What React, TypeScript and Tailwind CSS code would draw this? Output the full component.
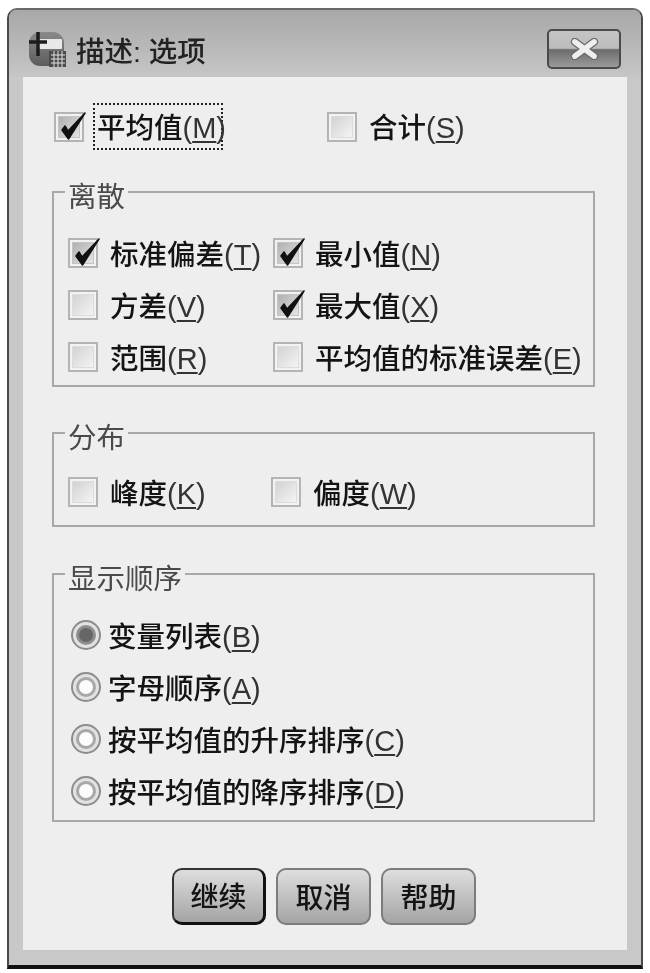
import React from "react";

const Check = ({ checked = false }: { checked?: boolean }) => (
  <span className="relative flex h-[30px] w-[30px] shrink-0 items-center justify-center border-2 border-[#b4b4b4] bg-[#f2f2f2]">
    <span
      className={
        checked
          ? "h-[22px] w-[22px] border border-[#c4c4c4] bg-gradient-to-br from-[#b0b0b0] to-[#e4e4e4]"
          : "h-[22px] w-[22px] border border-[#dcdcdc] bg-gradient-to-br from-[#d2d2d2] to-[#f4f4f4]"
      }
    />
    {checked && (
      <svg viewBox="0 0 30 30" className="absolute -left-[2px] -top-[2px] h-[30px] w-[30px] overflow-visible">
        <path d="M8 18 L14.5 27 L31 1 L14 19 L11 14 Z" fill="#111" stroke="#111" strokeWidth="1.5" strokeLinejoin="round" />
      </svg>
    )}
  </span>
);

const Radio = ({ checked = false }: { checked?: boolean }) => (
  <span className="flex h-[30px] w-[30px] shrink-0 items-center justify-center rounded-full border-2 border-[#8c8c8c] bg-[#e2e2e2]">
    <span
      className={
        checked
          ? "h-[20px] w-[20px] rounded-full border-[3px] border-[#8e8e8e] bg-[#666666]"
          : "h-[20px] w-[20px] rounded-full border-[3px] border-[#a8a8a8] bg-[#fcfcfc]"
      }
    />
  </span>
);

// label text + underlined mnemonic, e.g. 方差(V)
const Label = ({ text, mn }: { text: string; mn: string }) => (
  <span className="whitespace-nowrap pt-[3px] text-[28.5px] font-medium leading-[36px] text-[#141414]">
    {text}
    <span className="text-[29px] font-normal text-[#333]">
      (<span className="underline underline-offset-[3px]">{mn}</span>)
    </span>
  </span>
);

const CheckRow = ({ text, mn, checked }: { text: string; mn: string; checked?: boolean }) => (
  <div className="flex h-[52px] items-center gap-[12px]">
    <Check checked={checked} />
    <Label text={text} mn={mn} />
  </div>
);

const RadioRow = ({ text, mn, checked }: { text: string; mn: string; checked?: boolean }) => (
  <div className="flex h-[52px] items-center gap-[7px] pl-[3px]">
    <Radio checked={checked} />
    <Label text={text} mn={mn} />
  </div>
);

const Group = ({ title, className, children }: { title: string; className: string; children: React.ReactNode }) => (
  <fieldset className={`ml-[29px] w-[543px] border-2 border-[#a8a8a8] pl-[14px] ${className}`}>
    <legend className="-ml-[3px] px-[3px] text-[28.5px] leading-[28px] text-[#4a4a4a]">
      <span className="inline-block translate-y-[5px]">{title}</span>
    </legend>
    {children}
  </fieldset>
);

const Btn = ({ label, primary, className }: { label: string; primary?: boolean; className: string }) => (
  <button
    className={`flex h-[57px] items-center justify-center rounded-[10px] border-2 bg-gradient-to-b from-[#dedede] to-[#a4a4a4] pt-[4px] text-[28px] font-medium text-[#141414] ${
      primary ? "border-[#333] border-r-[3px] border-b-[3px] border-r-[#111] border-b-[#111]" : "border-[#7c7c7c]"
    } ${className}`}
  >
    {label}
  </button>
);

export default function App() {
  return (
    <div className="h-[973px] w-[650px] bg-white px-[7px] pt-[8px] font-['Liberation_Sans','Noto_Sans_CJK_SC',sans-serif] blur-[0.6px]">
      <div className="flex h-[961px] w-[636px] flex-col rounded-t-[10px] border-x-2 border-t-2 border-b-4 border-x-[#4a4a4a] border-t-[#6a6a6a] border-b-[#111] bg-[#c8c8c8]">
        {/* title bar */}
        <div className="flex h-[67px] shrink-0 items-center rounded-t-[8px] bg-gradient-to-b from-[#a8a8a8] to-[#c6c6c6] pl-[19px] pr-[20px] pt-[11px]">
          <svg viewBox="0 0 38 38" className="h-[38px] w-[38px] shrink-0">
            <defs>
              <linearGradient id="ic" x1="0" y1="0" x2="0" y2="1">
                <stop offset="0" stopColor="#8a8a8a" />
                <stop offset="1" stopColor="#5c5c5c" />
              </linearGradient>
            </defs>
            <rect x="1" y="2" width="35" height="34" rx="11" fill="url(#ic)" />
            <rect x="11" y="9" width="23" height="10" rx="1" fill="#e8e8e8" />
            <rect x="21" y="21" width="17" height="16" fill="#4c4c4c" />
            <path d="M23 25h14M23 29h14M23 33h14M26 21v16M30 21v16M34 21v16" stroke="#e0e0e0" strokeWidth="1" />
            <path d="M10 2v24M1 12h18" stroke="#1c1c1c" strokeWidth="3.5" />
          </svg>
          <span className="ml-[10px] mt-[5px] text-[28.5px] font-medium leading-[36px] text-[#222]">描述: 选项</span>
          <div className="ml-auto flex h-[40px] w-[74px] items-center justify-center rounded-[5px] border-2 border-[#4a4a4a] bg-[linear-gradient(#c4c4c4_0%,#bcbcbc_48%,#6c6c6c_52%,#9a9a9a_100%)]">
            <svg viewBox="0 0 24 18" className="h-[22px] w-[29px]">
              <path d="M4 3 L20 15 M20 3 L4 15" stroke="#6a6a6a" strokeWidth="6.5" strokeLinecap="round" />
              <path d="M4 3 L20 15 M20 3 L4 15" stroke="#eeeeee" strokeWidth="4.5" strokeLinecap="round" />
            </svg>
          </div>
        </div>

        {/* panel */}
        <div className="mx-[14px] h-[873px] w-[604px] shrink-0 bg-[#eeeeee]">
          <div className="flex pl-[31px] pt-[26px]">
            <div className="flex items-center gap-[9px]">
              <Check checked />
              <span className="flex h-[47px] w-[130px] items-center border-2 border-dotted border-[#222] pl-[2px]">
                <Label text="平均值" mn="M" />
              </span>
            </div>
            <div className="ml-[104px] flex items-center gap-[12px]">
              <Check />
              <Label text="合计" mn="S" />
            </div>
          </div>

          <Group title="离散" className="mt-[28px] h-[209px]">
            <div className="grid grid-cols-[205px_1fr] pt-[21px]">
              <CheckRow text="标准偏差" mn="T" checked />
              <CheckRow text="最小值" mn="N" checked />
              <CheckRow text="方差" mn="V" />
              <CheckRow text="最大值" mn="X" checked />
              <CheckRow text="范围" mn="R" />
              <CheckRow text="平均值的标准误差" mn="E" />
            </div>
          </Group>

          <Group title="分布" className="mt-[32px] h-[108px]">
            <div className="grid grid-cols-[203px_1fr] pt-[19px]">
              <CheckRow text="峰度" mn="K" />
              <CheckRow text="偏度" mn="W" />
            </div>
          </Group>

          <Group title="显示顺序" className="mt-[33px] h-[262px]">
            <div className="pt-[21px]">
              <RadioRow text="变量列表" mn="B" checked />
              <RadioRow text="字母顺序" mn="A" />
              <RadioRow text="按平均值的升序排序" mn="C" />
              <RadioRow text="按平均值的降序排序" mn="D" />
            </div>
          </Group>

          <div className="mt-[46px] flex gap-[10px] pl-[149px]">
            <Btn label="继续" primary className="w-[94px]" />
            <Btn label="取消" className="w-[95px]" />
            <Btn label="帮助" className="w-[95px]" />
          </div>
        </div>
      </div>
    </div>
  );
}
